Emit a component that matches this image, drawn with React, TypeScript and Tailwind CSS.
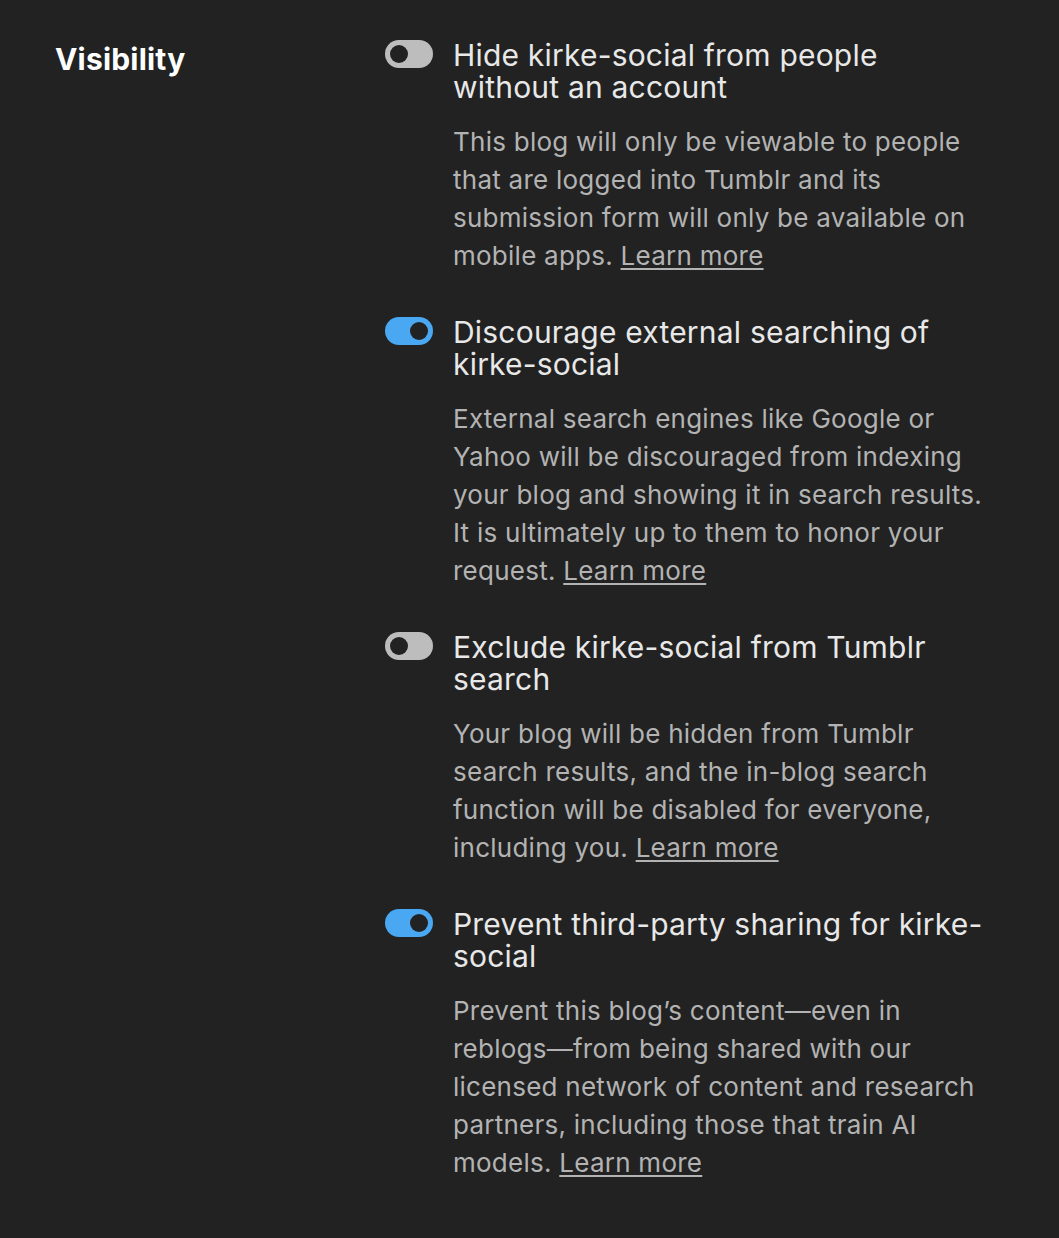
import React from "react";

type Item = {
  on: boolean;
  title: string;
  desc: string;
};

const items: Item[] = [
  {
    on: false,
    title: "Hide kirke-social from people without an account",
    desc: "This blog will only be viewable to people that are logged into Tumblr and its submission form will only be available on mobile apps.",
  },
  {
    on: true,
    title: "Discourage external searching of kirke-social",
    desc: "External search engines like Google or Yahoo will be discouraged from indexing your blog and showing it in search results. It is ultimately up to them to honor your request.",
  },
  {
    on: false,
    title: "Exclude kirke-social from Tumblr search",
    desc: "Your blog will be hidden from Tumblr search results, and the in-blog search function will be disabled for everyone, including you.",
  },
  {
    on: true,
    title: "Prevent third-party sharing for kirke-social",
    desc: "Prevent this blog\u2019s content\u2014even in reblogs\u2014from being shared with our licensed network of content and research partners, including those that train AI models.",
  },
];

function Toggle({ on }: { on: boolean }) {
  return (
    <div
      className={
        "mt-[1px] flex h-[28px] w-[48px] shrink-0 items-center rounded-full px-[5px] " +
        (on ? "justify-end bg-[#4aa8f2]" : "justify-start bg-[#bdbdbd]")
      }
    >
      <div className="h-[18px] w-[18px] rounded-full bg-[#222222]" />
    </div>
  );
}

export default function App() {
  return (
    <div
      className="min-h-[1238px] w-full bg-[#222222] antialiased"
      style={{ fontFamily: "Inter, 'Liberation Sans', sans-serif" }}
    >
      <div className="flex pt-[39px]">
        <div className="w-[385px] shrink-0 pl-[55px]">
          <h2 className="text-[30px] font-bold leading-[40px] tracking-[0.2px] text-white">Visibility</h2>
        </div>
        <div className="flex flex-col gap-[41px]">
          {items.map((it, i) => (
            <div key={i} className="flex gap-[20px]">
              <Toggle on={it.on} />
              <div className="w-[535px]">
                <div className="text-[30px] leading-[32px] tracking-[0.2px] text-[#e8e8e8]">
                  {it.title}
                </div>
                <p className="mt-[20px] text-[26px] leading-[38px] tracking-[0.25px] text-[#b3b3b3]">
                  {it.desc}{" "}
                  <a href="#" className="underline decoration-2 underline-offset-[3px]">
                    Learn more
                  </a>
                </p>
              </div>
            </div>
          ))}
        </div>
      </div>
    </div>
  );
}
